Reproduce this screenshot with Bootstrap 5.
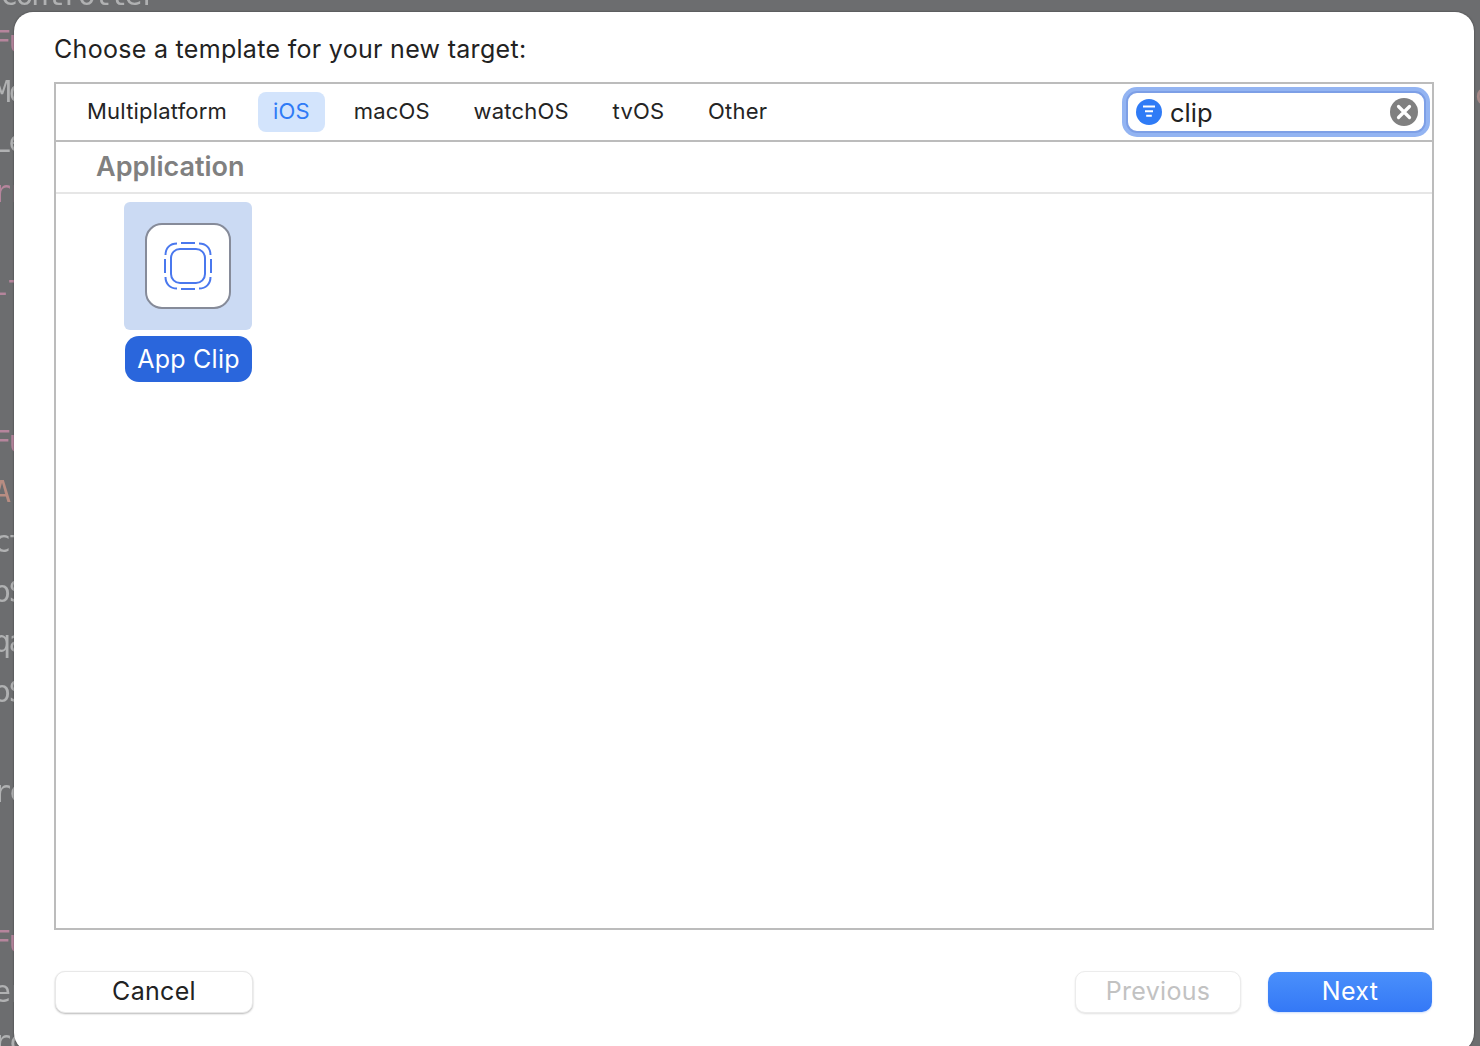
<!DOCTYPE html>
<html lang="en">
<head>
<meta charset="utf-8">
<title>Choose a template</title>
<link href="https://cdn.jsdelivr.net/npm/bootstrap@5.3.0/dist/css/bootstrap.min.css" rel="stylesheet">
<style>
html,body{height:100%;margin:0;overflow:hidden}
body{background:#6c6d6f;font-family:Inter,"Liberation Sans",sans-serif;color:#222}
.code-bg{height:1079px;overflow:hidden;font-family:"DejaVu Sans Mono",monospace;font-size:30px;letter-spacing:-2.5px;line-height:50px;color:#b0b1b2;filter:blur(.6px);margin:-33px 0 0 -7px;white-space:pre}
.code-bg div{height:50px}
.code-bg .code-top{padding:3px 0 0 7px}
.code-bg .pk{color:#b5859c}
.code-bg .or{color:#b88d82}
.code-right{position:absolute;left:1474px;top:70px;font-family:"DejaVu Sans Mono",monospace;font-size:30px;line-height:50px;color:#a98a88;filter:blur(.6px)}
.sheet{position:absolute;left:14px;top:12px;width:1460px;height:1040px;background:#fff;border-radius:19px;padding:20px 40px 38px;display:flex;flex-direction:column;box-shadow:0 0 2px rgba(0,0,0,.5)}
.sheet-title{font-size:25px;line-height:34px;height:50px;letter-spacing:.3px;margin:0;font-weight:400;color:#222}
.chooser{width:1380px;height:848px;border:2px solid #bcbcbc;display:flex;flex-direction:column}
.tabbar{height:58px;border-bottom:2px solid #bcbcbc;padding:8px 4px 0 16px;display:flex;position:relative}
.tabbar .nav{gap:13.75px;height:40px}
.tabbar .nav-link{font-size:22px;line-height:38px;padding:0 15px;height:40px;color:#242424;border-radius:8px;letter-spacing:.2px}
.tabbar .nav-link.active{background:#d3e4fc;color:#2f7bf6}
.tabbar .nav-item:first-child{margin-right:2.25px}
.finder{position:absolute;left:1070px;top:7px;width:300px;height:42px;border-radius:11px;border:2px solid #7d9fe6;box-shadow:0 0 0 4px #93b4f2;background:#fff;display:flex;align-items:center;padding:0 6px 0 8px}
.finder-text{font-size:25.500px;line-height:34px;color:#222;margin:2px 0 0 8px;flex-grow:1}
.group-head{height:52px;border-bottom:2px solid #e6e6e6;padding-left:40px;font-size:27px;font-weight:600;line-height:49px;color:#808080}
.tpl-area{flex-grow:1;padding:8px 0 0 68px}
.tpl{width:128px}
.tpl-tile{width:128px;height:128px;background:#cbdaf3;border-radius:6px;display:flex;align-items:center;justify-content:center}
.tpl-icon{width:86px;height:86px;background:#fff;border:2px solid #868b99;border-radius:17px;display:flex;align-items:center;justify-content:center}
.tpl-label{margin:6px 0 0 1px;width:127px;height:46px;background:#2a66dc;color:#fff;border-radius:14px;font-size:25px;letter-spacing:.25px;line-height:46px;text-align:center}
.foot{margin-top:41px;display:flex;align-items:flex-start}
.foot .btn{font-size:25px;letter-spacing:.3px;line-height:36px;padding:0 0 2px;border-radius:10px;height:42px}
.btn-cancel{width:198px;margin-left:1px;background:#fff;color:#222;border:1px solid #e8e8e8;box-shadow:0 1px 2px rgba(0,0,0,.28)}
.btn.btn-prev{width:166px;margin-left:auto;background:#fff;color:#c2c2c2;border:1px solid #ececec;box-shadow:0 1px 2px rgba(0,0,0,.12);opacity:1}
.btn-go{width:164px;margin:1px 2px 0 27px;color:#fff;border:0;background:linear-gradient(#4a90fb,#3478f6);box-shadow:0 1px 2px rgba(52,120,246,.25)}
.foot .btn-go{height:40px}
</style>
</head>
<body>
<div class="code-bg" aria-hidden="true"><div class="code-top">controller</div><div class="pk">Fu</div><div>Mo</div><div>Le</div><div class="pk">rr</div><div></div><div class="pk">-T</div><div></div><div></div><div class="pk">Fu</div><div class="or">A'</div><div>ct</div><div>oS</div><div>qa</div><div>oS</div><div></div><div>rc</div><div></div><div></div><div class="pk">Fu</div><div>er</div><div>rc</div></div>
<div class="code-right" aria-hidden="true">c</div>

<main class="sheet">
  <h1 class="sheet-title">Choose a template for your new target:</h1>
  <section class="chooser">
    <div class="tabbar">
      <ul class="nav">
        <li class="nav-item"><a class="nav-link" href="#">Multiplatform</a></li>
        <li class="nav-item"><a class="nav-link active" href="#">iOS</a></li>
        <li class="nav-item"><a class="nav-link" href="#">macOS</a></li>
        <li class="nav-item"><a class="nav-link" href="#">watchOS</a></li>
        <li class="nav-item"><a class="nav-link" href="#">tvOS</a></li>
        <li class="nav-item"><a class="nav-link" href="#">Other</a></li>
      </ul>
      <div class="finder">
        <svg width="26" height="26" viewBox="0 0 26 26"><circle cx="13" cy="13" r="13" fill="#2f7bf6"/><path d="M7 7.500h12M9 12.200h8M10.200 16.800h5.600" stroke="#fff" stroke-width="1.900" fill="none"/></svg>
        <span class="finder-text">clip</span>
        <svg width="28" height="28" viewBox="0 0 28 28"><circle cx="14" cy="14" r="14" fill="#808080"/><path d="M8.500 8.500l11 11M19.500 8.500l-11 11" stroke="#fff" stroke-width="3.200" stroke-linecap="round" fill="none"/></svg>
      </div>
    </div>
    <div class="group-head">Application</div>
    <div class="tpl-area">
      <div class="tpl">
        <div class="tpl-tile">
          <div class="tpl-icon">
            <svg width="48" height="48" viewBox="0 0 48 48" fill="none" stroke="#4a78ee" stroke-width="2">
              <rect x="7" y="7" width="34" height="34" rx="9"/>
              <path d="M1 17v14M47 17v14M17 1h14M17 47h14"/>
              <path d="M1.500 13C1.500 6 6 1.500 13 1.500M35 1.500C42 1.500 46.500 6 46.500 13M46.500 35C46.500 42 42 46.500 35 46.500M13 46.500C6 46.500 1.500 42 1.500 35"/>
            </svg>
          </div>
        </div>
        <div class="tpl-label">App Clip</div>
      </div>
    </div>
  </section>
  <div class="foot">
    <button type="button" class="btn btn-cancel">Cancel</button>
    <button type="button" class="btn btn-prev" disabled>Previous</button>
    <button type="button" class="btn btn-go">Next</button>
  </div>
</main>
<script src="https://cdn.jsdelivr.net/npm/bootstrap@5.3.0/dist/js/bootstrap.bundle.min.js"></script>
</body>
</html>
